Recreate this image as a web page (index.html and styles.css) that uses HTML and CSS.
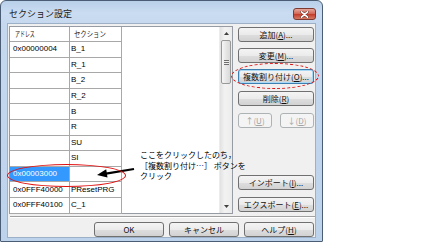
FILE: index.html
```html
<!DOCTYPE html>
<html lang="ja">
<head>
  <meta charset="UTF-8">
  <meta name="viewport" content="width=device-width, initial-scale=1.0">
  <title>セクション設定</title>
  <link rel="stylesheet" href="styles.css">
</head>
<body>

<div class="window">
  <div class="titleBar">
    <span class="title">セクション設定</span>
    <div class="closeBtn">
      <svg width="9" height="7" viewBox="0 0 9 7">
        <path d="M1.5 0.8 L7.5 6.2 M7.5 0.8 L1.5 6.2" stroke="#5a2a22" stroke-width="2.6" stroke-linecap="round"/>
        <path d="M1.5 0.8 L7.5 6.2 M7.5 0.8 L1.5 6.2" stroke="#ffffff" stroke-width="1.6" stroke-linecap="round"/>
      </svg>
    </div>
  </div>

  <div class="client">
    <div class="mainRow">
      <div class="listBox">
        <div class="listArea">
          <div class="sectionTable">
            <div class="cell head"><span class="squeeze narrow">アドレス</span></div>
            <div class="cell head col2"><span class="squeeze">セクション</span></div>

            <div class="cell">0x00000004</div><div class="cell col2">B_1</div>
            <div class="cell"></div><div class="cell col2">R_1</div>
            <div class="cell"></div><div class="cell col2">B_2</div>
            <div class="cell"></div><div class="cell col2">R_2</div>
            <div class="cell"></div><div class="cell col2">B</div>
            <div class="cell"></div><div class="cell col2">R</div>
            <div class="cell"></div><div class="cell col2">SU</div>
            <div class="cell"></div><div class="cell col2">SI</div>
            <div class="cell selected">0x00003000</div><div class="cell col2"></div>
            <div class="cell">0x0FFF40000</div><div class="cell col2">PResetPRG</div>
            <div class="cell">0x0FFF40100</div><div class="cell col2">C_1</div>
          </div>
        </div>
        <div class="scrollBar">
          <div class="arrowBtn">
            <svg width="5" height="3" viewBox="0 0 5 3"><path d="M0 3 L2.5 0 L5 3 Z" fill="#404040"/></svg>
          </div>
          <div class="thumb"><span class="grip"></span></div>
          <div class="track"></div>
          <div class="arrowBtn">
            <svg width="5" height="3" viewBox="0 0 5 3"><path d="M0 0 L2.5 3 L5 0 Z" fill="#404040"/></svg>
          </div>
        </div>
      </div>

      <div class="sideButtons">
        <div class="btn">追加(<u>A</u>)...</div>
        <div class="btn">変更(<u>M</u>)...</div>
        <div class="btn focused">複数割り付け(<u>O</u>)...</div>
        <div class="btn extraGap">削除(<u>R</u>)</div>
        <div class="moveRow extraGap">
          <div class="btn small disabled">↑(<u>U</u>)</div>
          <div class="btn small disabled">↓(<u>D</u>)</div>
        </div>
        <div class="ioButtons">
          <div class="btn">インポート(<u>I</u>)...</div>
          <div class="btn">エクスポート(<u>E</u>)...</div>
        </div>
      </div>
    </div>

    <div class="separator"></div>

    <div class="footer">
      <div class="btn wide">OK</div>
      <div class="btn wide">キャンセル</div>
      <div class="btn wide">ヘルプ(<u>H</u>)</div>
    </div>
  </div>
</div>

<div class="note">
  <div>ここをクリックしたのち，</div>
  <div>［複数割り付け<span class="dots">…</span>］ ボタンを</div>
  <div>クリック</div>
</div>

<svg class="pointer" width="44" height="18" viewBox="0 0 44 18">
  <path d="M39 5 L11 9.6" stroke="#000" stroke-width="2.2" fill="none"/>
  <path d="M2 11 L12.5 13.6 L11.2 5.2 Z" fill="#000"/>
</svg>

<div class="mark markRow"></div>
<div class="mark markButton"></div>

</body>
</html>
```

FILE: styles.css
```css
*, *:before, *:after {
  box-sizing: border-box;
}

body {
  margin: 0;
  padding: 0;
  background: #ffffff;
  font-family: "Liberation Sans", "Noto Sans CJK JP", sans-serif;
  color: #000000;
}

.window {
  width: 323px;
  height: 242px;
  border: 1px solid #4a5d74;
  border-radius: 6px 6px 1px 1px;
  background: linear-gradient(to bottom, #b9d0ea 0px, #cadcf1 12px, #c5d8ee 24px, #bdd3ec 100%);
  padding: 0 6px 3px 6px;
  display: flex;
  flex-direction: column;
}

.titleBar {
  height: 22px;
  display: flex;
  justify-content: space-between;
  align-items: flex-start;
}

.title {
  margin-left: 2px;
  margin-top: 3px;
  line-height: 20px;
  font-size: 9px;
  font-family: "Noto Sans CJK JP", sans-serif;
  color: #1a1a1a;
}

.closeBtn {
  margin-top: 7px;
  width: 23px;
  height: 12px;
  border: 1px solid #7c3a31;
  border-radius: 3px;
  background: linear-gradient(to bottom, #e8a89c 0%, #d26b5a 45%, #c2402d 55%, #d77a66 100%);
  display: flex;
  align-items: center;
  justify-content: center;
}

.client {
  flex: 1;
  background: #f0f0f0;
  border: 1px solid #9cb0c7;
  padding: 2px 1px 0 1px;
  display: flex;
  flex-direction: column;
}

.mainRow {
  display: flex;
  gap: 5px;
  height: 188px;
}

/* list with grid */
.listBox {
  width: 224px;
  height: 188px;
  border: 1px solid #979ca4;
  background: #ffffff;
  display: flex;
}

.listArea {
  flex: 1;
}

.sectionTable {
  display: grid;
  grid-template-columns: 60px 52px;
  grid-template-rows: 15px repeat(11, 15.6px);
}

.cell {
  border-right: 1px solid #a8a8a8;
  border-bottom: 1px solid #a8a8a8;
  font-size: 8px;
  line-height: 14px;
  padding-left: 3px;
  white-space: nowrap;
  overflow: hidden;
  display: flex;
  align-items: center;
}

.cell.col2 {
  padding-left: 1px;
}

.cell.head {
  font-family: "Noto Sans CJK JP", sans-serif;
  font-size: 7.5px;
  padding-left: 5px;
  color: #1a1a1a;
}

.cell.head.col2 {
  padding-left: 4px;
}

.squeeze {
  display: inline-block;
  transform: scaleX(0.85);
  transform-origin: left center;
}

.squeeze.narrow {
  transform: scaleX(0.66);
}

.cell.selected {
  background: #3399ff;
  color: #ffffff;
}

.scrollBar {
  width: 13px;
  display: flex;
  flex-direction: column;
  background: linear-gradient(to right, #e2e2e2, #f2f2f2 40%, #ececec);
  border-left: 1px solid #ececec;
}

.arrowBtn {
  height: 13px;
  display: flex;
  align-items: center;
  justify-content: center;
}

.thumb {
  height: 44px;
  margin: 0 1px;
  border: 1px solid #999999;
  border-radius: 2px;
  background: linear-gradient(to right, #f6f6f6, #e6e6e6 50%, #d9d9d9);
  display: flex;
  align-items: center;
  justify-content: center;
}

.grip {
  width: 5px;
  height: 5px;
  background: repeating-linear-gradient(to bottom, #6e6e6e 0px, #6e6e6e 1px, #eeeeee 1px, #eeeeee 2px);
}

.track {
  flex: 1;
}

/* buttons */
.sideButtons {
  width: 76px;
  display: flex;
  flex-direction: column;
  gap: 6px;
  padding-top: 1px;
  padding-bottom: 2px;
}

.btn {
  height: 15px;
  border: 1px solid #707070;
  border-radius: 3px;
  background: linear-gradient(to bottom, #f4f4f4 0%, #ebebeb 50%, #dedede 51%, #d2d2d2 100%);
  font-family: "Noto Sans CJK JP", "Liberation Sans", sans-serif;
  font-size: 8px;
  line-height: 13px;
  text-align: center;
  white-space: nowrap;
  color: #111111;
}

.btn u {
  text-underline-offset: 1px;
}

.btn.focused {
  border-color: #3c7fb1;
  box-shadow: inset 0 0 0 1px #a9d8f4;
}

.btn.disabled {
  border-color: #adb2b5;
  background: #f4f4f4;
  color: #a3a3a3;
}

.btn.small {
  width: 34px;
}

.extraGap {
  margin-top: 1px;
}

.moveRow {
  display: flex;
  justify-content: space-between;
}

.ioButtons {
  margin-top: auto;
  display: flex;
  flex-direction: column;
  gap: 7px;
}

.separator {
  margin: 2px -1px 0 1px;
  height: 2px;
  border-top: 1px solid #a0a0a0;
  border-bottom: 1px solid #ffffff;
}

.footer {
  margin-top: 4px;
  display: flex;
  justify-content: flex-end;
  gap: 5px;
}

.btn.wide {
  width: 70px;
}

/* annotation drawn over the dialog */
.note {
  position: absolute;
  left: 140px;
  top: 150px;
  font-family: "Noto Sans CJK JP", sans-serif;
  font-size: 8px;
  line-height: 10.5px;
  color: #000000;
  white-space: nowrap;
}

.dots {
  color: #2e2e7a;
}

.pointer {
  position: absolute;
  left: 95px;
  top: 164px;
}

.mark {
  position: absolute;
  border-radius: 50%;
  border: 1px solid #e01010;
}

.markRow {
  left: 7px;
  top: 164px;
  width: 119px;
  height: 23px;
}

.markButton {
  left: 231px;
  top: 63px;
  width: 88px;
  height: 26px;
  border-style: dashed;
}
```
